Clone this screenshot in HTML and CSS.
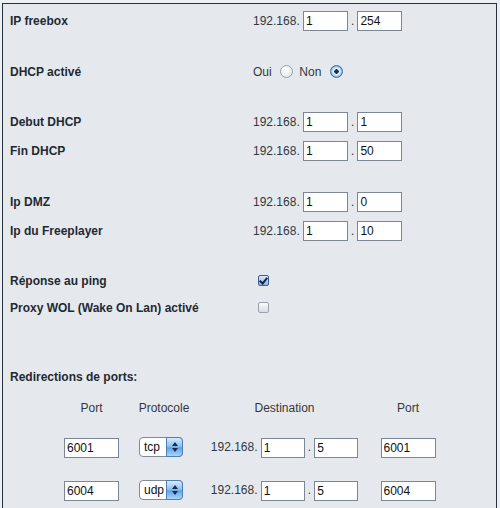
FILE: index.html
```html
<!DOCTYPE html>
<html>
	<head>
		<meta charset="UTF-8">
		<title>Configuration freebox</title>
		<link rel="stylesheet" href="styles.css">
	</head>
	<body>
		<div class="panel">
			<div class="group">
				<div class="row">
					<span class="label">IP freebox</span>
					<span class="value">192.168. <input class="ip" type="text" value="1"><span class="dot">.</span><input class="ip" type="text" value="254"></span>
				</div>
			</div>

			<div class="group wide">
				<div class="row">
					<span class="label">DHCP activé</span>
					<span class="value">Oui <input class="radio" type="radio" name="dhcp"> Non <input class="radio" type="radio" name="dhcp" checked></span>
				</div>
			</div>

			<div class="group">
				<div class="row">
					<span class="label">Debut DHCP</span>
					<span class="value">192.168. <input class="ip" type="text" value="1"><span class="dot">.</span><input class="ip" type="text" value="1"></span>
				</div>
				<div class="row">
					<span class="label">Fin DHCP</span>
					<span class="value">192.168. <input class="ip" type="text" value="1"><span class="dot">.</span><input class="ip" type="text" value="50"></span>
				</div>
			</div>

			<div class="group wide">
				<div class="row">
					<span class="label">Ip DMZ</span>
					<span class="value">192.168. <input class="ip" type="text" value="1"><span class="dot">.</span><input class="ip" type="text" value="0"></span>
				</div>
				<div class="row">
					<span class="label">Ip du Freeplayer</span>
					<span class="value">192.168. <input class="ip" type="text" value="1"><span class="dot">.</span><input class="ip" type="text" value="10"></span>
				</div>
			</div>

			<div class="group checks">
				<div class="row">
					<span class="label">Réponse au ping</span>
					<span class="value"><input class="check" type="checkbox" checked></span>
				</div>
				<div class="row">
					<span class="label">Proxy WOL (Wake On Lan) activé</span>
					<span class="value"><input class="check" type="checkbox"></span>
				</div>
			</div>

			<div class="title">Redirections de ports:</div>

			<div class="ports head">
				<span>Port</span>
				<span class="proto">Protocole</span>
				<span>Destination</span>
				<span>Port</span>
			</div>
			<div class="ports first">
				<span><input class="port" type="text" value="6001"></span>
				<span class="select"><select><option>tcp</option><option>udp</option></select><i class="arrows"><svg width="8" height="12" viewBox="0 0 8 12"><path d="M4 1 L7 5 L1 5 Z M4 11 L7 7 L1 7 Z" fill="#1a2a4a"/></svg></i></span>
				<span>192.168. <input class="ip small" type="text" value="1"><span class="dot">.</span><input class="ip small" type="text" value="5"></span>
				<span><input class="port" type="text" value="6001"></span>
			</div>
			<div class="ports second">
				<span><input class="port" type="text" value="6004"></span>
				<span class="select"><select><option>udp</option><option>tcp</option></select><i class="arrows"><svg width="8" height="12" viewBox="0 0 8 12"><path d="M4 1 L7 5 L1 5 Z M4 11 L7 7 L1 7 Z" fill="#1a2a4a"/></svg></i></span>
				<span>192.168. <input class="ip small" type="text" value="1"><span class="dot">.</span><input class="ip small" type="text" value="5"></span>
				<span><input class="port" type="text" value="6004"></span>
			</div>
		</div>
	</body>
</html>
```

FILE: styles.css
```css
*{
	margin: 0;
	padding: 0;
	box-sizing: border-box;
}
body{
	background: #edf0f3;
	padding: 3px 3px 0 2px;
	font: 12px "Liberation Sans", Arial, sans-serif;
	color: #33383d;
}
.panel{
	height: 520px;
	border: 1px solid #27313b;
	border-bottom: none;
	background: #e5e9ed;
	padding: 7px 0 0 7px;
}
.group + .group{
	margin-top: 30px;
}
.group.wide{
	margin-top: 31px;
}
.row{
	display: flex;
	align-items: center;
	height: 20px;
}
.row + .row{
	margin-top: 9px;
}
.checks .row + .row{
	margin-top: 7px;
}
.label{
	width: 243px;
	font-weight: bold;
	color: #1f2933;
}
.value{
	display: block;
	line-height: 20px;
	white-space: nowrap;
}
.dot{
	margin: 0 3px;
}
input[type=text]{
	height: 20px;
	border: 1px solid #7b8794;
	background: #fff;
	font: 12px "Liberation Sans", Arial, sans-serif;
	color: #111;
	padding: 0 2px;
	vertical-align: middle;
	outline: none;
}
.ip{
	width: 45px;
}
.ip.small{
	width: 44px;
}
.port{
	width: 55px;
}

/* radios et cases */
.radio, .check{
	appearance: none;
	-webkit-appearance: none;
	vertical-align: middle;
	position: relative;
	top: -1px;
}
.radio{
	width: 13px;
	height: 13px;
	border-radius: 50%;
	border: 1px solid #98a1ab;
	background: radial-gradient(circle at 40% 35%, #ffffff 0%, #e6e9ec 70%, #cfd4da 100%);
	margin: 0 3px 0 5px;
}
.radio:checked{
	border-color: #3c6fa8;
	background: radial-gradient(circle, #1d2f55 0, #1d2f55 2px, #ffffff 2.5px, #c4ddf6 4px, #6a9fd6 6px);
}
.check{
	width: 11px;
	height: 11px;
	border: 1px solid #9aa3ad;
	border-radius: 2px;
	background: linear-gradient(#fafbfc, #d8dde2);
	margin-left: 5px;
}
.check:checked{
	border-color: #3d5f8f;
	background: linear-gradient(#d9e8f8, #8fb4e0);
}
.check:checked::after{
	content: "";
	position: absolute;
	left: 2px;
	top: 0;
	width: 3px;
	height: 6px;
	border: solid #14244a;
	border-width: 0 2px 2px 0;
	transform: rotate(40deg);
}

/* redirections */
.title{
	margin-top: 49px;
	height: 20px;
	line-height: 20px;
	font-weight: bold;
	color: #1f2933;
}
.ports{
	display: grid;
	grid-template-columns: 79px 60px 187px 60px;
	justify-items: center;
	align-items: center;
	height: 20px;
	line-height: 20px;
	margin-left: 42px;
	white-space: nowrap;
}
.ports.head{
	margin-top: 11px;
}
.ports.head .proto{
	margin-left: 6px;
}
.ports.first{
	margin-top: 19px;
}
.ports.second{
	margin-top: 23px;
}
.select{
	position: relative;
	display: inline-block;
	width: 44px;
	height: 20px;
}
.select select{
	appearance: none;
	-webkit-appearance: none;
	width: 44px;
	height: 20px;
	border: 1px solid #7f8b99;
	border-radius: 4px;
	background: #fff;
	padding-left: 4px;
	font: 12px "Liberation Sans", Arial, sans-serif;
	color: #111;
	outline: none;
}
.arrows{
	position: absolute;
	right: 0;
	top: 0;
	width: 17px;
	height: 20px;
	border: 1px solid #4f7fb5;
	border-radius: 0 4px 4px 0;
	background: linear-gradient(#d6ebfd, #8cc3f4 45%, #5fa4e8 55%, #a9d6fb);
	display: flex;
	align-items: center;
	justify-content: center;
	pointer-events: none;
}
```
